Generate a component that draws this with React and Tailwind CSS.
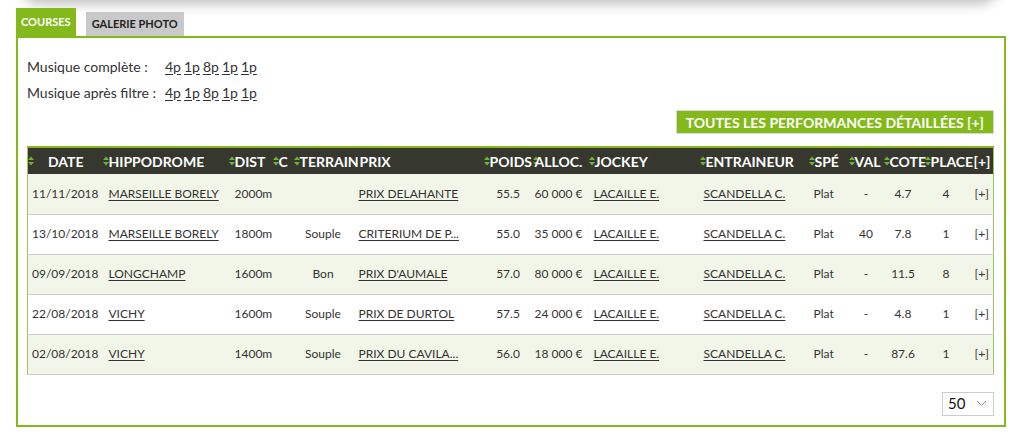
import React from 'react';

const SortIcon = () => (
  <svg width="6" height="10" viewBox="0 0 6 10" className="shrink-0">
    <polygon points="0,4 3,0.5 6,4" fill="#6fb52c" />
    <polygon points="0,6 3,9.5 6,6" fill="#6fb52c" />
  </svg>
);

const columns = [
  { label: 'DATE', w: 'w-[75px]', head: 'ml-[14px]', cell: 'text-center' },
  { label: 'HIPPODROME', w: 'w-[126px]', cell: 'pl-[6px]' },
  { label: 'DIST', w: 'w-[44px]', cell: 'pl-[6px]' },
  { label: 'C', w: 'w-[21px]', cell: '' },
  { label: 'TERRAIN', w: 'w-[59px]', cell: 'text-center' },
  { label: 'PRIX', w: 'w-[131px]', noIcon: true, head: 'ml-[7px]', cell: 'pl-[6px]' },
  { label: 'POIDS', w: 'w-[49px]', cell: 'text-center' },
  { label: 'ALLOC.', w: 'w-[56px]', head: '-ml-[4px]', cell: 'text-right pr-[6px]' },
  { label: 'JOCKEY', w: 'w-[111px]', cell: 'pl-[5px]' },
  { label: 'ENTRAINEUR', w: 'w-[109px]', cell: 'pl-[4px]' },
  { label: 'SPÉ', w: 'w-[40px]', cell: 'pl-[5px]' },
  { label: 'VAL', w: 'w-[35px]', cell: 'text-center' },
  { label: 'COTE', w: 'w-[41px]', cell: 'text-center pr-[2px]' },
  { label: 'PLACE', w: 'w-[47px]', cell: 'text-center pr-[4px]' },
  { label: '[+]', w: 'w-[22px]', noIcon: true, head: 'ml-[2px]', cell: 'pl-[3px]' },
];

const rows = [
  ['11/11/2018', 'MARSEILLE BORELY', '2000m', '', '', 'PRIX DELAHANTE', '55.5', '60 000 €', 'LACAILLE E.', 'SCANDELLA C.', 'Plat', '-', '4.7', '4'],
  ['13/10/2018', 'MARSEILLE BORELY', '1800m', '', 'Souple', 'CRITERIUM DE P...', '55.0', '35 000 €', 'LACAILLE E.', 'SCANDELLA C.', 'Plat', '40', '7.8', '1'],
  ['09/09/2018', 'LONGCHAMP', '1600m', '', 'Bon', "PRIX D'AUMALE", '57.0', '80 000 €', 'LACAILLE E.', 'SCANDELLA C.', 'Plat', '-', '11.5', '8'],
  ['22/08/2018', 'VICHY', '1600m', '', 'Souple', 'PRIX DE DURTOL', '57.5', '24 000 €', 'LACAILLE E.', 'SCANDELLA C.', 'Plat', '-', '4.8', '1'],
  ['02/08/2018', 'VICHY', '1400m', '', 'Souple', 'PRIX DU CAVILA...', '56.0', '18 000 €', 'LACAILLE E.', 'SCANDELLA C.', 'Plat', '-', '87.6', '1'],
];

const linkCols = [1, 5, 8, 9];

const Musique = ({ label }) => (
  <div className="flex h-[26px] items-center">
    <span className="w-[138px]">{label}</span>
    <span className="flex gap-[3px]">
      {['4p', '1p', '8p', '1p', '1p'].map((m, i) => (
        <a key={i} className="underline underline-offset-2">{m}</a>
      ))}
    </span>
  </div>
);

export default function App() {
  return (
    <div className="min-h-[438px] bg-white font-['Lato','Liberation_Sans',sans-serif] text-[#333]">
      <div className="mx-[20px] -mt-[20px] h-[20px] rounded-b-[24px] bg-white shadow-[0_4px_12px_rgba(0,0,0,0.25)]" />

      <div className="px-[16px] pt-[8px]">
        <div className="flex items-end gap-[10px]">
          <div className="flex h-[28px] items-center bg-[#84b91b] px-[5px] text-[11px] font-bold text-white">COURSES</div>
          <div className="flex h-[24px] items-center bg-[#c9c9c9] px-[6px] text-[11px] font-bold text-[#222]">GALERIE PHOTO</div>
        </div>

        <div className="w-[990px] border-2 border-[#84b91b] pb-[9px] pl-[9px] pr-[10px] pt-[15px]">
          <div className="text-[14px]">
            <Musique label="Musique complète :" />
            <Musique label="Musique après filtre :" />
          </div>

          <div className="mt-[5px] flex justify-end">
            <button className="h-[24px] border border-[#d8d8d8] bg-[#84b91b] px-[9px] text-[14px] font-bold text-white">
              TOUTES LES PERFORMANCES DÉTAILLÉES [+]
            </button>
          </div>

          <table className="mt-[12px] w-[967px] table-fixed border-collapse border-x border-[#9fc45e] text-[12px]">
            <colgroup>
              {columns.map((c, i) => (
                <col key={i} className={c.w} />
              ))}
            </colgroup>
            <thead>
              <tr className="h-[27px] border-t-2 border-[#84b91b] bg-[#36382f] text-[14px] font-bold text-white">
                {columns.map((c, i) => (
                  <th key={i} className="p-0 text-left font-bold">
                    <div className="flex items-center whitespace-nowrap">
                      {!c.noIcon && <SortIcon />}
                      <span className={c.head || ''}>{c.label}</span>
                    </div>
                  </th>
                ))}
              </tr>
            </thead>
            <tbody>
              {rows.map((r, ri) => (
                <tr key={ri} className={`h-[40px] border-b border-[#cccccc] ${ri % 2 === 0 ? 'bg-[#f2f6e8]' : 'bg-white'}`}>
                  {r.map((v, ci) => (
                    <td key={ci} className={`whitespace-nowrap p-0 ${columns[ci].cell}`}>
                      {linkCols.includes(ci) ? <a className="underline underline-offset-2">{v}</a> : v}
                    </td>
                  ))}
                  <td className="p-0 pl-[3px]">[+]</td>
                </tr>
              ))}
            </tbody>
          </table>

          <div className="mt-[17px] flex justify-end">
            <div className="flex h-[24px] w-[52px] items-center justify-between border border-[#cccccc] pl-[5px] pr-[6px]">
              <span className="text-[15px] text-[#111]">50</span>
              <svg width="11" height="7" viewBox="0 0 11 7">
                <polyline points="1,1 5.5,5.5 10,1" fill="none" stroke="#888" strokeWidth="1" />
              </svg>
            </div>
          </div>
        </div>
      </div>
    </div>
  );
}
